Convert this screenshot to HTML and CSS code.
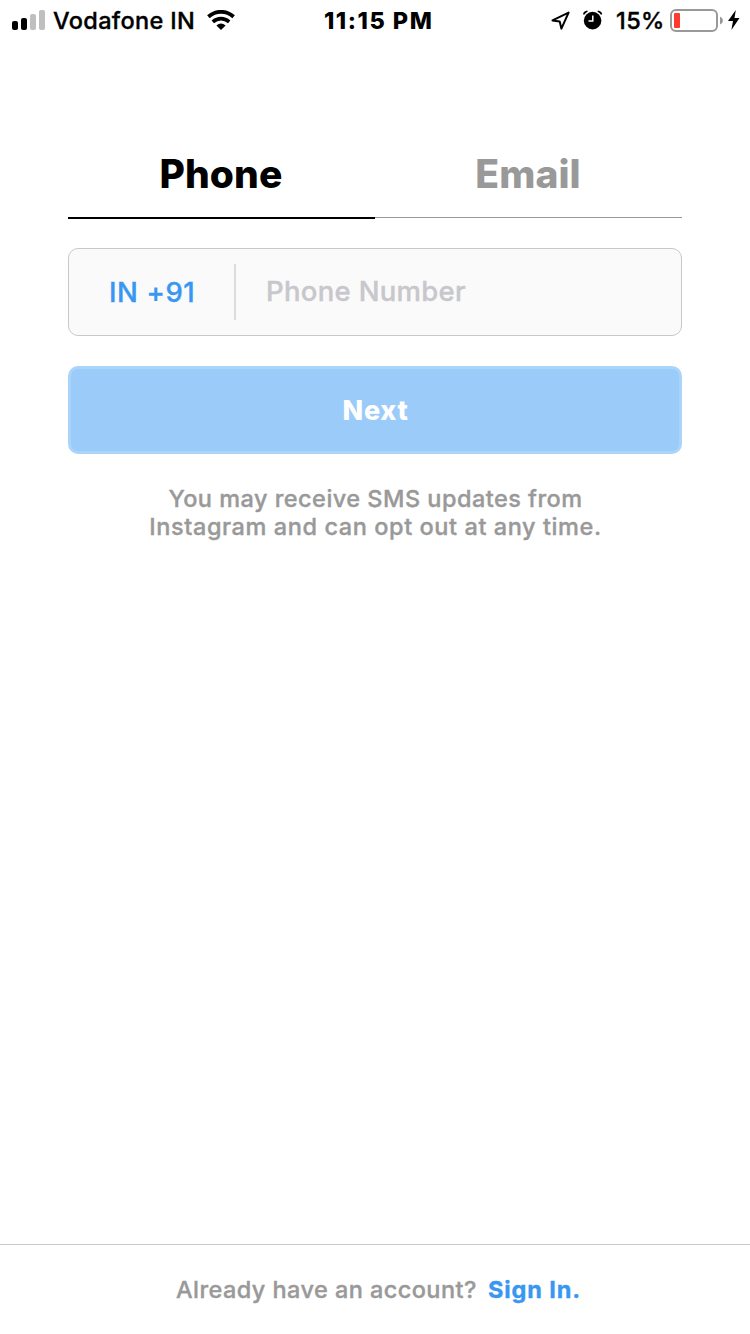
FILE: index.html
```html
<!DOCTYPE html>
<html lang="en">
<head>
<meta charset="utf-8">
<title>Sign up</title>
<link rel="stylesheet" href="styles.css">
</head>
<body>
<div class="screen">
  <header class="status">
    <div class="status-left">
      <svg class="signal" width="33" height="20" viewBox="0 0 33 20">
        <rect x="0" y="11" width="6" height="9" rx="2"/>
        <rect x="9" y="8" width="6" height="12" rx="2"/>
        <rect class="dim" x="18" y="4" width="6" height="16" rx="2"/>
        <rect class="dim" x="27" y="0" width="6" height="20" rx="2"/>
      </svg>
      <span class="carrier">Vodafone IN</span>
      <svg class="wifi" width="28" height="20" viewBox="0 0 28 20">
        <path d="M1.4 6.7Q7 1.8 14 1.8T26.6 6.7" fill="none" stroke="#000" stroke-width="3.8"/>
        <path d="M5.8 11.8Q9.5 8.7 14 8.7T22.2 11.8" fill="none" stroke="#000" stroke-width="3.7"/>
        <path d="M9.4 15.5Q14 11.7 18.6 15.5L14 20Z"/>
      </svg>
    </div>
    <span class="clock">11:15 PM</span>
    <div class="status-right">
      <svg class="location" width="20" height="20" viewBox="0 0 20 20">
        <path d="M1.5 9.4L17.6 1.6L10.4 17.6L8.7 10.5Z" fill="none" stroke="#000" stroke-width="2" stroke-linejoin="round"/>
      </svg>
      <svg class="alarm" width="20" height="20" viewBox="0 0 20 20">
        <circle cx="9.6" cy="10.6" r="8.8"/>
        <path d="M0 4.3Q.5 1 4.3.5L4.7 1.8Q2.5 2.6 1.2 4.8ZM19.2 4.3Q18.7 1 14.9.5L14.5 1.8Q16.7 2.6 18 4.8Z"/>
        <path d="M9.8 5.5V11H5.5" fill="none" stroke="#fff" stroke-width="1.5"/>
      </svg>
      <span class="percent">15%</span>
      <svg class="battery" width="53" height="23" viewBox="0 0 53 23">
        <rect x="1" y="1" width="46" height="21" rx="5" fill="#fff" stroke="#999" stroke-width="2"/>
        <rect x="4" y="4" width="6" height="15" rx="1" fill="#ff3b30"/>
        <path d="M50 7.5Q53 9 53 11.5T50 15.5Z" fill="#999"/>
      </svg>
      <svg class="bolt" width="12" height="20" viewBox="0 0 12 20">
        <path d="M7.8 0L0 11H5L3.4 20L11.5 8H6.5Z"/>
      </svg>
    </div>
  </header>

  <main class="form">
    <nav class="tabs">
      <a class="tab active">Phone</a>
      <a class="tab">Email</a>
    </nav>
    <div class="field">
      <span class="code">IN +91</span>
      <span class="placeholder">Phone Number</span>
    </div>
    <div class="next">Next</div>
    <p class="note"><span class="note-a">You may receive SMS updates from</span><br><span class="note-b">Instagram and can opt out at any time.</span></p>
  </main>

  <footer class="footer">
    <span class="question">Already have an account?</span>
    <span class="signin">Sign In.</span>
  </footer>
</div>
</body>
</html>
```
FILE: styles.css
```css
* { box-sizing: border-box; }
body {
  margin: 0;
  background: #fff;
  color: #000;
  font-family: Inter, "Liberation Sans", sans-serif;
}
.screen {
  width: 750px;
  height: 1334px;
  display: flex;
  flex-direction: column;
}
.carrier, .percent, .code, .placeholder, .note, .question, .signin {
  -webkit-text-stroke: .35px currentColor;
}
.status {
  height: 40px;
  display: grid;
  grid-template-columns: 312px auto 1fr;
  padding: 0 10px 0 12px;
  line-height: 40px;
  font-size: 23.5px;
  font-weight: 500;
  white-space: nowrap;
}
.status svg { display: block; flex: none; }
.status-left, .status-right { display: flex; align-items: flex-start; }
.status-right { justify-content: flex-end; }
.signal { margin-top: 10px; }
.dim { fill: #bfbfbf; }
.carrier { width: 142px; margin: 1px 12px 0 8px; letter-spacing: .35px; }
.wifi { margin-top: 10px; }
.clock { padding-top: 1px; font-weight: 800; letter-spacing: 1.5px; }
.location { margin: 11px 12px 0 0; }
.alarm { margin: 10px 13px 0 0; }
.percent { width: 48px; margin: 1px 6px 0 0; letter-spacing: .4px; }
.battery { margin: 9px 5px 0 0; }
.bolt { margin-top: 10px; }
.form { flex: 1; padding: 92px 68px 0; }
.tabs { display: grid; grid-template-columns: 1fr 1fr; height: 87px; }
.tab {
  height: 86px;
  padding: 17px 1px 0 0;
  border-bottom: 1px solid #999;
  color: #999;
  text-align: center;
  font-size: 39px;
  font-weight: 800;
  letter-spacing: .1px;
  line-height: 50px;
}
.tab.active { height: 87px; border-bottom: 2px solid #000; color: #000; }
.field {
  display: flex;
  align-items: center;
  height: 88px;
  margin-top: 29px;
  border: 1px solid #c8c8c8;
  border-radius: 10px;
  background: #fafafa;
  font-size: 27px;
  font-weight: 500;
}
.code {
  width: 167px;
  height: 56px;
  padding-left: 40px;
  border-right: 2px solid #dbdbdb;
  color: #3897f0;
  font-size: 27.5px;
  letter-spacing: .6px;
  line-height: 57px;
}
.placeholder {
  padding: 0 0 2px 30px;
  color: #c7c7cc;
  font-size: 27.5px;
  letter-spacing: .3px;
  line-height: 54px;
}
.next {
  height: 88px;
  margin-top: 30px;
  padding: 1px 0 0 1px;
  border: 3px solid #abd4fa;
  border-radius: 10px;
  background: #9bcbf9;
  color: #fff;
  text-align: center;
  font-size: 27px;
  font-weight: 800;
  letter-spacing: .7px;
  line-height: 82px;
}
.note {
  margin: 31px 0 0;
  padding-left: 1px;
  color: #999;
  text-align: center;
  font-size: 23.5px;
  font-weight: 500;
  line-height: 28px;
  white-space: nowrap;
}
.note-a { letter-spacing: .47px; }
.note-b { letter-spacing: .58px; }
.footer {
  display: flex;
  height: 90px;
  padding-left: 176px;
  border-top: 1px solid #c8c8c8;
  color: #999;
  font-size: 23.5px;
  font-weight: 500;
  line-height: 90px;
  white-space: nowrap;
}
.question { width: 312px; letter-spacing: .43px; }
.signin { color: #3897f0; font-weight: 700; letter-spacing: .9px; }
```
